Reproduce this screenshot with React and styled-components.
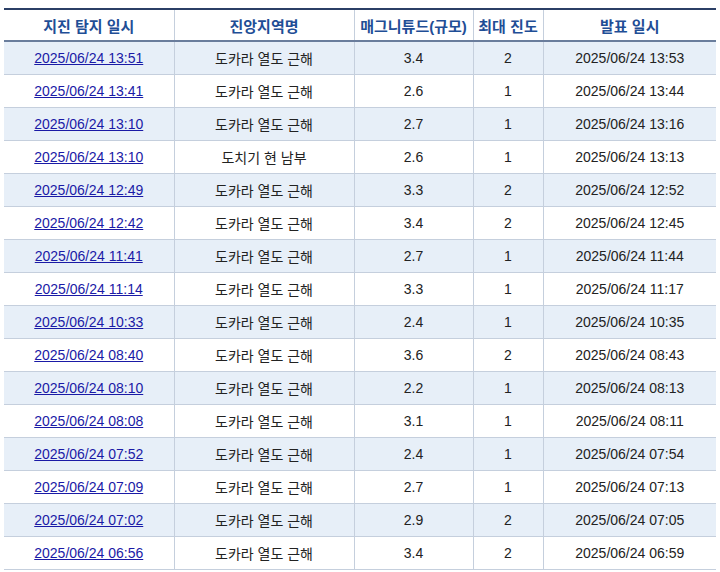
import React from 'react';
import styled, { createGlobalStyle } from 'styled-components';

const GlobalStyle = createGlobalStyle`
    body {
        margin: 0;
        background: #fff;
        font-family: "Liberation Sans", "Noto Sans CJK KR", sans-serif;
    }
`;

const rows = [
    ['2025/06/24 13:51', '도카라 열도 근해', '3.4', '2', '2025/06/24 13:53'],
    ['2025/06/24 13:41', '도카라 열도 근해', '2.6', '1', '2025/06/24 13:44'],
    ['2025/06/24 13:10', '도카라 열도 근해', '2.7', '1', '2025/06/24 13:16'],
    ['2025/06/24 13:10', '도치기 현 남부', '2.6', '1', '2025/06/24 13:13'],
    ['2025/06/24 12:49', '도카라 열도 근해', '3.3', '2', '2025/06/24 12:52'],
    ['2025/06/24 12:42', '도카라 열도 근해', '3.4', '2', '2025/06/24 12:45'],
    ['2025/06/24 11:41', '도카라 열도 근해', '2.7', '1', '2025/06/24 11:44'],
    ['2025/06/24 11:14', '도카라 열도 근해', '3.3', '1', '2025/06/24 11:17'],
    ['2025/06/24 10:33', '도카라 열도 근해', '2.4', '1', '2025/06/24 10:35'],
    ['2025/06/24 08:40', '도카라 열도 근해', '3.6', '2', '2025/06/24 08:43'],
    ['2025/06/24 08:10', '도카라 열도 근해', '2.2', '1', '2025/06/24 08:13'],
    ['2025/06/24 08:08', '도카라 열도 근해', '3.1', '1', '2025/06/24 08:11'],
    ['2025/06/24 07:52', '도카라 열도 근해', '2.4', '1', '2025/06/24 07:54'],
    ['2025/06/24 07:09', '도카라 열도 근해', '2.7', '1', '2025/06/24 07:13'],
    ['2025/06/24 07:02', '도카라 열도 근해', '2.9', '2', '2025/06/24 07:05'],
    ['2025/06/24 06:56', '도카라 열도 근해', '3.4', '2', '2025/06/24 06:59'],
];

const headers = ['지진 탐지 일시', '진앙지역명', '매그니튜드(규모)', '최대 진도', '발표 일시'];
const widths = [170, 180, 119, 70, 173];

export default function App() {
    return (
        <Wrap>
            <GlobalStyle />
            <Table>
                <colgroup>
                    {widths.map((w, i) => (
                        <col key={i} style={{ width: w }} />
                    ))}
                </colgroup>
                <thead>
                    <tr>
                        {headers.map(h => (
                            <Th key={h}>{h}</Th>
                        ))}
                    </tr>
                </thead>
                <tbody>
                    {rows.map((r, i) => (
                        <Tr key={i} shaded={i % 2 === 0 ? 1 : 0}>
                            <Td>
                                <DateLink href="#">{r[0]}</DateLink>
                            </Td>
                            <Td>{r[1]}</Td>
                            <Td>{r[2]}</Td>
                            <Td>{r[3]}</Td>
                            <Td>{r[4]}</Td>
                        </Tr>
                    ))}
                </tbody>
            </Table>
        </Wrap>
    );
}

const Wrap = styled.div`
    padding: 8px 4px 0 4px;
`;

const Table = styled.table`
    width: 712px;
    border-collapse: collapse;
    table-layout: fixed;
    border-top: 2px solid #2b3f66;
`;

const Th = styled.th`
    height: 30px;
    padding: 0;
    font-size: 15px;
    font-weight: bold;
    color: #1f4e96;
    text-align: center;
    border-left: 1px solid #c5cfdd;
    border-bottom: 2px solid #6a7d9c;
    &:first-child {
        border-left: none;
    }
`;

const Tr = styled.tr`
    background: ${p => (p.shaded ? '#e7eff8' : '#fff')};
`;

const Td = styled.td`
    height: 32px;
    padding: 0;
    font-size: 14px;
    color: #222;
    text-align: center;
    border-left: 1px solid #c5cfdd;
    border-bottom: 1px solid #c5cfdd;
    &:first-child {
        border-left: none;
    }
`;

const DateLink = styled.a`
    color: #1a1aa6;
    text-decoration: underline;
`;
